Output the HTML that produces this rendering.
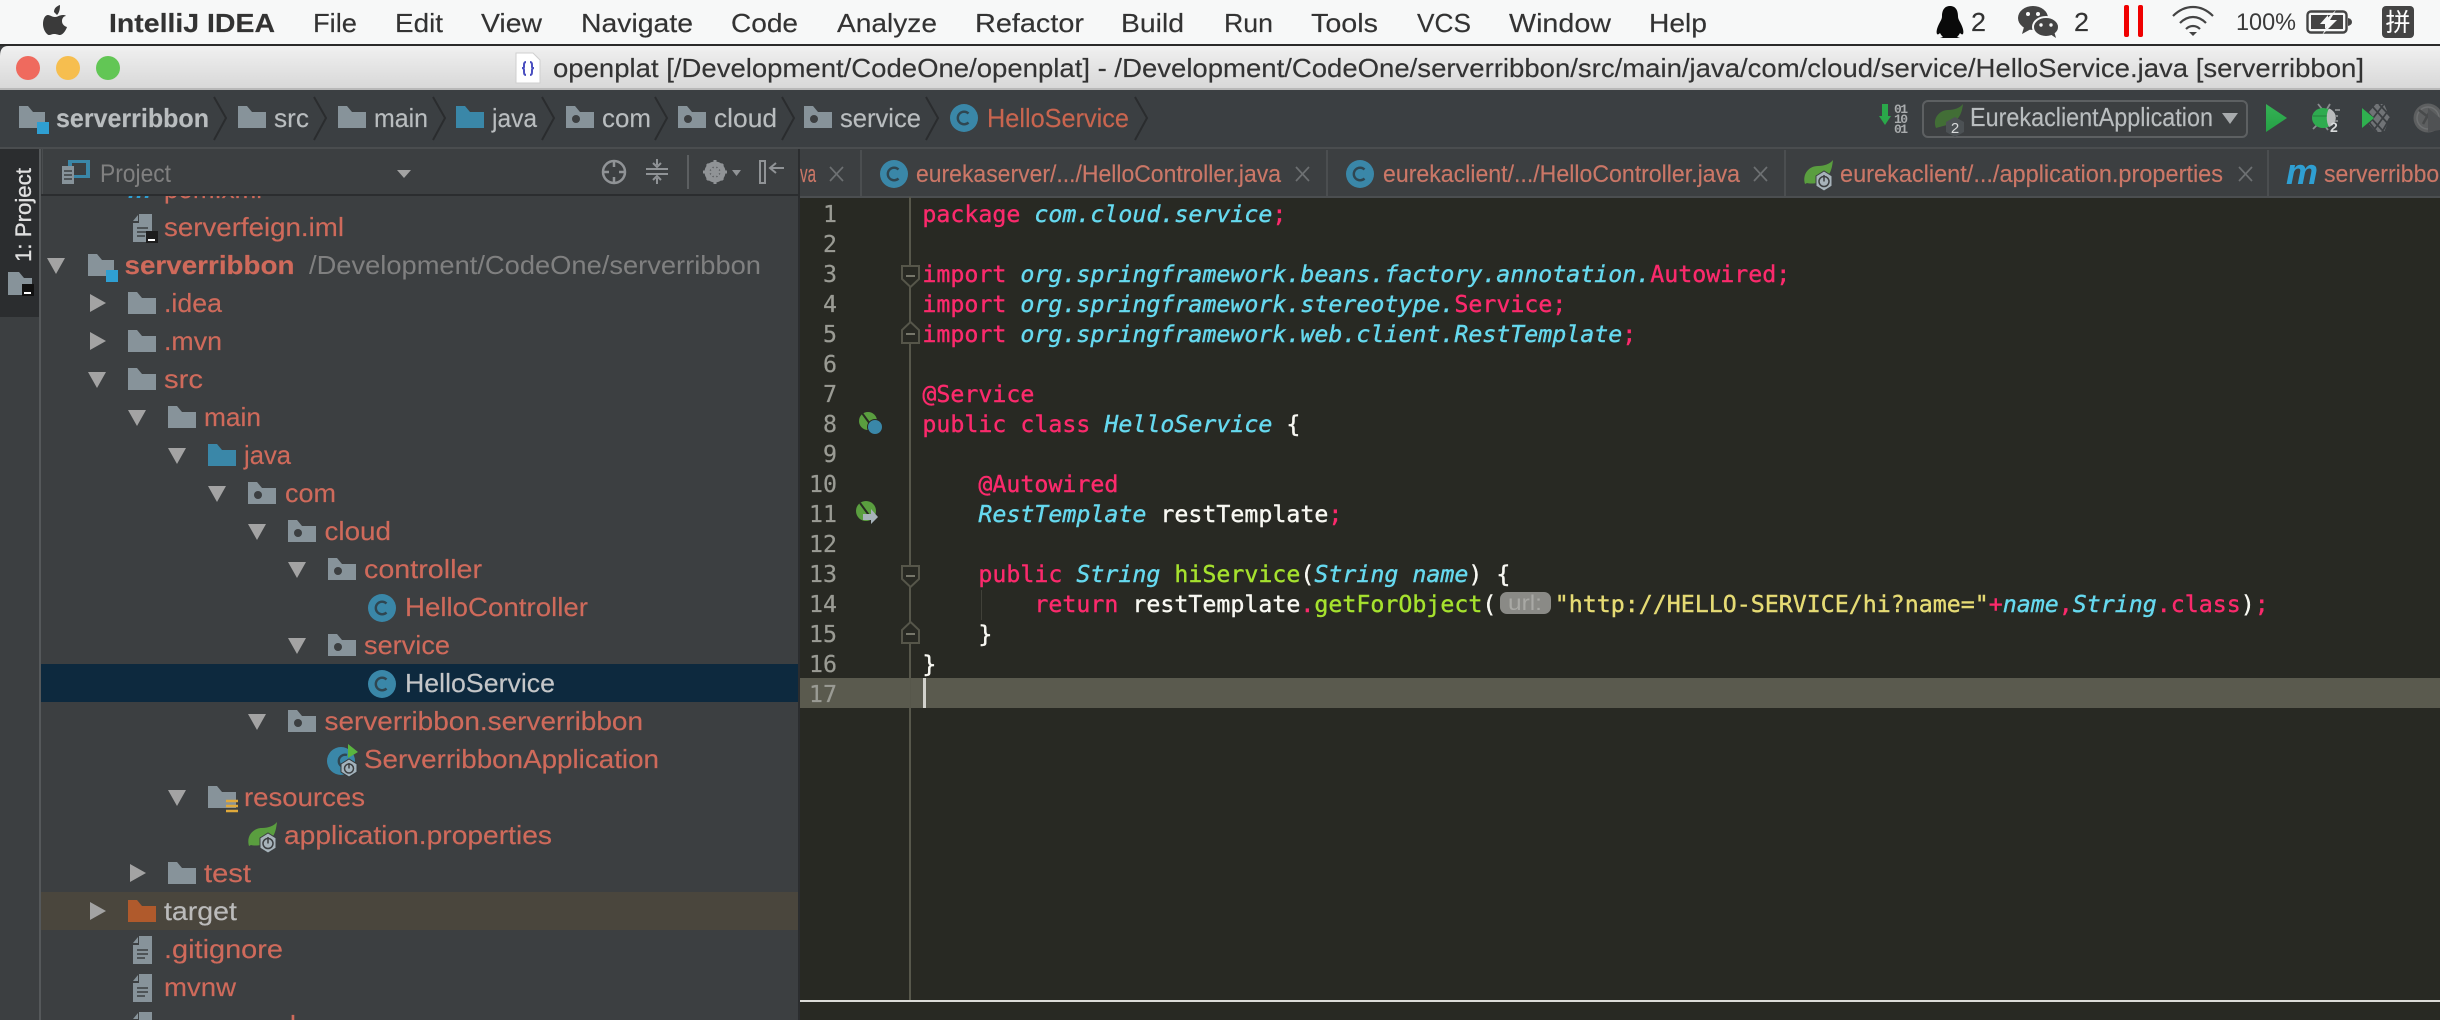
<!DOCTYPE html>
<html><head><meta charset="utf-8"><title>IntelliJ IDEA</title>
<style>
html,body{margin:0;padding:0;background:#282923;width:2440px;height:1020px;overflow:hidden}
svg{display:block;font-family:"Liberation Sans","Noto Sans CJK SC",sans-serif;filter:blur(.35px)}
.t{font-size:26px;fill:#cf6a5b;stroke:#cf6a5b;stroke-width:.15px}
.g{fill:#bbbbbb}
.menu{font-size:26px;fill:#333;stroke:#333;stroke-width:.15px}
.nav{font-size:26px;fill:#b9bdbf;stroke:#b9bdbf;stroke-width:.15px}
.tab{font-size:24px;fill:#cb7767;stroke:#cb7767;stroke-width:.15px}
.code{font-family:"DejaVu Sans Mono","Liberation Mono",monospace;font-size:23.25px;white-space:pre;stroke-width:.4px}
.k{fill:#fb2a6c;stroke:#fb2a6c}.c{fill:#66d9ef;stroke:#66d9ef;font-style:italic}.w{fill:#f8f8f2;stroke:#f8f8f2}.m{fill:#a6e22e;stroke:#a6e22e}.s{fill:#e6db74;stroke:#e6db74}
.ln{font-family:"DejaVu Sans Mono","Liberation Mono",monospace;font-size:23.25px;fill:#9a9b94;stroke:#9a9b94;stroke-width:.25px;text-anchor:end}
</style></head><body>
<svg width="2440" height="1020" viewBox="0 0 2440 1020" xmlns="http://www.w3.org/2000/svg">
<defs>
<g id="fo"><path d="M0 0H9L14 6H28V22H0Z" fill="#87939a"/></g>
<g id="fj"><path d="M0 0H9L14 6H28V22H0Z" fill="#3a87a8"/></g>
<g id="fp"><path d="M0 0H9L14 6H28V22H0Z" fill="#87939a"/><ellipse cx="10" cy="13" rx="4" ry="4" fill="#3c3f41"/></g>
<g id="fm"><path d="M0 0H9L14 6H26V22H0Z" fill="#87939a"/><rect x="18" y="16" width="12" height="12" fill="#2f9fd2"/></g>
<g id="dn"><path d="M0 0H18L9 16Z" fill="#a3a3a3"/></g>
<g id="rt"><path d="M0 0L16 9L0 18Z" fill="#a3a3a3"/></g>
<g id="cc"><circle cx="14" cy="14" r="14" fill="#3a87a8"/><path d="M18.500 9.500A6.300 6.300 0 1 0 18.500 18.500" fill="none" stroke="#2f4651" stroke-width="2.400"/></g>
<g id="file"><path d="M6 0H19V28H0V9H6Z" fill="#87939a"/><path d="M0 7L5 1V7Z" fill="#87939a"/><path d="M4 14H15M4 18H15M4 22H12" stroke="#3c3f41" stroke-width="1.600"/></g>
<g id="leaf"><path d="M29 0C28 8 27 14 20 20C14 24 6 24 3 23L1 24C-2 14 5 6 14 6C20 6 26 4 29 0Z" fill="#5a9e3f"/><path d="M12 16L20 11L28 16V26L20 31L12 26Z" fill="#a7b3ba" stroke="#3c3f41" stroke-width="1"/><circle cx="20" cy="21.500" r="5" fill="none" stroke="#3c3f41" stroke-width="1.500"/><path d="M20 15V21.500" stroke="#3c3f41" stroke-width="1.500"/></g>
<linearGradient id="tg" x1="0" y1="0" x2="0" y2="1"><stop offset="0" stop-color="#f0f0f0"/><stop offset="1" stop-color="#d8d8d8"/></linearGradient>
<linearGradient id="rg" x1="0" y1="0" x2="0" y2="1"><stop offset="0" stop-color="#35b255"/><stop offset="1" stop-color="#25a045"/></linearGradient>
</defs>

<rect width="2440" height="1020" fill="#3c3f41"/>
<!-- menu bar -->
<rect width="2440" height="44" fill="#f7f8f8"/>
<rect y="44" width="2440" height="2" fill="#2a2a2a"/>
<path d="M56 15C58 13 59 10 59 5C56 6 53 8 53 12ZM62 15C58 15 57 17 54 17C51 17 49 15 47 15C44 15 42 19 42 24C42 30 46 35 48 35C50 35 51 34 53 34C56 34 57 35 59 35C62 35 65 30 66 27C63 26 61 24 61 21C61 18 63 16 65 16C64 15 63 15 62 15Z" fill="#3a3a3a" transform="translate(1 0)"/>
<text x="109" y="32" class="menu" font-weight="bold" textLength="166" lengthAdjust="spacingAndGlyphs">IntelliJ IDEA</text>
<text x="313" y="32" class="menu" textLength="44" lengthAdjust="spacingAndGlyphs">File</text>
<text x="395" y="32" class="menu" textLength="48" lengthAdjust="spacingAndGlyphs">Edit</text>
<text x="481" y="32" class="menu" textLength="61" lengthAdjust="spacingAndGlyphs">View</text>
<text x="581" y="32" class="menu" textLength="112" lengthAdjust="spacingAndGlyphs">Navigate</text>
<text x="731" y="32" class="menu" textLength="67" lengthAdjust="spacingAndGlyphs">Code</text>
<text x="837" y="32" class="menu" textLength="100" lengthAdjust="spacingAndGlyphs">Analyze</text>
<text x="975" y="32" class="menu" textLength="109" lengthAdjust="spacingAndGlyphs">Refactor</text>
<text x="1121" y="32" class="menu" textLength="63" lengthAdjust="spacingAndGlyphs">Build</text>
<text x="1224" y="32" class="menu" textLength="49" lengthAdjust="spacingAndGlyphs">Run</text>
<text x="1311" y="32" class="menu" textLength="67" lengthAdjust="spacingAndGlyphs">Tools</text>
<text x="1417" y="32" class="menu" textLength="54" lengthAdjust="spacingAndGlyphs">VCS</text>
<text x="1509" y="32" class="menu" textLength="102" lengthAdjust="spacingAndGlyphs">Window</text>
<text x="1649" y="32" class="menu" textLength="58" lengthAdjust="spacingAndGlyphs">Help</text>
<!-- status icons -->
<path d="M1950 6C1944 6 1942 11 1942 16C1942 19 1941 20 1939 24C1937 28 1936 32 1937 34C1938 35 1939 34 1940 33C1941 35 1942 36 1943 37L1940 38H1960L1957 37C1958 36 1959 35 1960 33C1961 34 1962 35 1963 34C1964 32 1963 28 1961 24C1959 20 1958 19 1958 16C1958 11 1956 6 1950 6Z" fill="#0a0a0a"/>
<text x="1971" y="31" class="menu" textLength="15" lengthAdjust="spacingAndGlyphs">2</text>
<ellipse cx="2033" cy="18" rx="15" ry="12" fill="#444"/><path d="M2024 27L2022 34L2031 29Z" fill="#444"/>
<ellipse cx="2046" cy="27" rx="13" ry="10" fill="#444" stroke="#f7f8f8" stroke-width="2"/><path d="M2050 34L2056 38L2054 31Z" fill="#444"/>
<circle cx="2028" cy="14" r="2" fill="#f7f8f8"/><circle cx="2038" cy="14" r="2" fill="#f7f8f8"/><circle cx="2041" cy="25" r="1.700" fill="#f7f8f8"/><circle cx="2051" cy="25" r="1.700" fill="#f7f8f8"/>
<text x="2074" y="31" class="menu" textLength="15" lengthAdjust="spacingAndGlyphs">2</text>
<rect x="2124" y="5" width="5" height="32" rx="2" fill="#f00000"/><rect x="2138" y="5" width="5" height="32" rx="2" fill="#f00000"/>
<path d="M2173 16C2185 4 2201 4 2213 16M2180 23C2188 15 2198 15 2206 23M2186 29C2190 25 2196 25 2200 29" fill="none" stroke="#444" stroke-width="2.200"/><path d="M2189 32H2197L2193 36Z" fill="#444"/>
<text x="2236" y="30" font-size="24" fill="#3a3a3a" textLength="60" lengthAdjust="spacingAndGlyphs">100%</text>
<rect x="2307.500" y="11.500" width="39" height="21" rx="3.500" fill="none" stroke="#444" stroke-width="2.400"/><path d="M2348 18Q2352 19 2352 22Q2352 25 2348 26Z" fill="#444"/>
<path d="M2311 15H2328L2320 24H2325V29H2311Z" fill="#444"/><path d="M2343 15V29H2325L2333 20H2328V15Z" fill="#444"/>
<path d="M2336 10L2322 23H2329L2322 35L2337 20H2330Z" fill="#f7f8f8"/>
<rect x="2382" y="6" width="32" height="32" rx="4" fill="#444"/>
<text x="2398" y="31" font-size="25" fill="#fff" text-anchor="middle" style="font-family:'Noto Sans CJK SC',sans-serif">拼</text>
<!-- title bar -->
<path d="M0 56Q0 46 8 46H2440V88H0Z" fill="url(#tg)"/>
<rect y="88" width="2440" height="2" fill="#b8b8b8"/>
<circle cx="28" cy="68" r="12" fill="#ef6a5e"/><circle cx="68" cy="68" r="12" fill="#f6be4f"/><circle cx="108" cy="68" r="12" fill="#62c655"/>
<path d="M516 53H533L540 60V83H516Z" fill="#fff" stroke="#cfcfcf"/><path d="M526 62Q524 62 524 65V67Q524 68 522 68Q524 68 524 70V72Q524 75 526 75M530 62Q532 62 532 65V67Q532 68 534 68Q532 68 532 70V72Q532 75 530 75" fill="none" stroke="#4a4fc0" stroke-width="2"/>
<text x="553" y="77" font-size="26" fill="#333" stroke="#333" stroke-width=".15" textLength="1811" lengthAdjust="spacingAndGlyphs">openplat [/Development/CodeOne/openplat] - /Development/CodeOne/serverribbon/src/main/java/com/cloud/service/HelloService.java [serverribbon]</text>
<!-- nav bar -->
<rect y="90" width="2440" height="58" fill="#3b3f42"/>
<rect y="147" width="2440" height="2" fill="#4a4d4f"/>
<use href="#fm" x="19" y="106"/>
<text x="56" y="127" class="nav" font-weight="bold" textLength="153" lengthAdjust="spacingAndGlyphs">serverribbon</text>
<g fill="none" stroke="#2a2c2e" stroke-width="2">
<path d="M214 97L226 118L214 140"/><path d="M314 97L326 118L314 140"/><path d="M433 97L445 118L433 140"/><path d="M542 97L554 118L542 140"/><path d="M655 97L667 118L655 140"/><path d="M782 97L794 118L782 140"/><path d="M926 97L938 118L926 140"/><path d="M1135 97L1147 118L1135 140"/>
</g>
<use href="#fo" x="238" y="106"/><text x="274" y="127" class="nav" textLength="35" lengthAdjust="spacingAndGlyphs">src</text>
<use href="#fo" x="338" y="106"/><text x="374" y="127" class="nav" textLength="54" lengthAdjust="spacingAndGlyphs">main</text>
<use href="#fj" x="456" y="106"/><text x="492" y="127" class="nav" textLength="45" lengthAdjust="spacingAndGlyphs">java</text>
<use href="#fp" x="566" y="106"/><text x="602" y="127" class="nav" textLength="49" lengthAdjust="spacingAndGlyphs">com</text>
<use href="#fp" x="678" y="106"/><text x="714" y="127" class="nav" textLength="63" lengthAdjust="spacingAndGlyphs">cloud</text>
<use href="#fp" x="804" y="106"/><text x="840" y="127" class="nav" textLength="81" lengthAdjust="spacingAndGlyphs">service</text>
<use href="#cc" x="950" y="104"/><text x="987" y="127" font-size="26" fill="#c9654f" stroke="#c9654f" stroke-width=".15" textLength="142" lengthAdjust="spacingAndGlyphs">HelloService</text>
<!-- run toolbar -->
<path d="M1882 104H1888V116H1891L1885 125L1879 116H1882Z" fill="#2aa84a"/>
<g font-size="13" font-weight="bold" fill="#a8abad" style="font-family:'Liberation Mono',monospace"><text x="1894" y="113" textLength="14">01</text><text x="1894" y="123" textLength="14">10</text><text x="1894" y="133" textLength="14">01</text></g>
<rect x="1923" y="101" width="324" height="36" rx="5" fill="#3c3f41" stroke="#5d6062" stroke-width="2"/>
<path d="M1963 104C1962 112 1960 120 1950 124C1944 126 1939 127 1936 128C1932 118 1940 110 1948 110C1954 110 1960 108 1963 104Z" fill="#426e36"/>
<path d="M1946 122L1955 117L1964 122V132L1955 137L1946 132Z" fill="#4c5154"/><text x="1955" y="133" font-size="15" fill="#d8dadb" text-anchor="middle">2</text>
<text x="1970" y="126" class="nav" textLength="243" lengthAdjust="spacingAndGlyphs">EurekaclientApplication</text>
<path d="M2222 113H2238L2230 124Z" fill="#a8abad"/>
<path d="M2266 104L2287 118L2266 132Z" fill="url(#rg)"/>
<path d="M2318 104L2322 109M2330 104L2327 109M2313 129L2317 125M2328 130L2325 126" stroke="#8a8d8f" stroke-width="1.800" fill="none"/>
<ellipse cx="2323" cy="118" rx="11" ry="10" fill="#2fab50"/><path d="M2313 116H2332" stroke="#257f3e" stroke-width="1"/>
<path d="M2329 108.500A11 10 0 0 1 2329 127C2326 122 2326 113 2329 108.500Z" fill="#b9bbbc"/>
<path d="M2335 110H2340M2335 116H2338M2335 121H2338" stroke="#8a8d8f" stroke-width="1.800"/>
<text x="2330" y="132" font-size="14" font-weight="bold" fill="#d8dadb">2</text>
<path d="M2376 104H2384L2390 118L2384 132H2376L2369 124L2374 118L2369 112Z" fill="#707376"/>
<path d="M2372 106L2390 126M2379 104L2390 116M2369 116L2384 132M2369 122L2377 132M2384 104L2370 122M2390 108L2374 130M2390 118L2382 132" stroke="#3b3f42" stroke-width="1.800"/>
<path d="M2362 108L2374 118L2362 128Z" fill="#2fb04f"/>
<circle cx="2428" cy="118" r="14.500" fill="#5d5f60"/><circle cx="2428" cy="118" r="11" fill="none" stroke="#6e7071" stroke-width="1.500"/><path d="M2419 110L2432 120M2423 124L2429 113" stroke="#484a4b" stroke-width="2.500"/><path d="M2428 108L2440 118V130L2428 132Z" fill="#505254"/>
<!-- side strip -->
<rect y="149" width="39" height="871" fill="#3c3f41"/>
<rect x="39" y="149" width="2" height="871" fill="#55585a"/>
<rect y="149" width="39" height="168" fill="#2b2d2f"/>
<text x="31" y="262" font-size="22" fill="#e0e0e0" stroke="#e0e0e0" stroke-width=".3" transform="rotate(-90 31 262)" textLength="94" lengthAdjust="spacingAndGlyphs">1: Project</text>
<path d="M8 272H19L24 278H32V295H8Z" fill="#87939a"/><rect x="22" y="284" width="12" height="12" fill="#111"/><rect x="24" y="292" width="7" height="2" fill="#fff"/>
<!-- project tree: clipped row first -->
<text x="128" y="198" font-size="26" font-style="italic" font-weight="bold" fill="#2f9fd2">m</text>
<text x="164" y="198" class="t" textLength="98" lengthAdjust="spacingAndGlyphs">pom.xml</text>
<!-- project header -->
<rect x="41" y="149" width="757" height="45" fill="#3c3f41"/>
<rect x="41" y="194" width="757" height="2" fill="#2b2d2f"/>
<rect x="42" y="149" width="1" height="45" fill="#4a4d4f"/>
<rect x="68" y="160" width="22" height="18" fill="#3a87a8"/><rect x="72" y="163" width="14" height="12" fill="#3c3f41"/>
<path d="M62 166H74V184H62Z" fill="#87939a"/><path d="M64 171H72M64 175H72M64 179H72" stroke="#3c3f41" stroke-width="1.500"/>
<text x="100" y="182" font-size="25" fill="#808080" textLength="71" lengthAdjust="spacingAndGlyphs">Project</text>
<path d="M397 170H411L404 178Z" fill="#a3a3a3"/>
<circle cx="614" cy="172" r="11" fill="none" stroke="#909396" stroke-width="2.500"/><path d="M614 160V167M614 177V184M602 172H609M619 172H626" stroke="#909396" stroke-width="2.500"/>
<path d="M646 169H668M646 174H668" stroke="#909396" stroke-width="2"/><path d="M657 159V165M653 163L657 167L661 163M657 184V178M653 180L657 176L661 180" fill="none" stroke="#909396" stroke-width="2"/>
<rect x="687" y="155" width="2" height="34" fill="#5c5f61"/>
<circle cx="715" cy="172" r="8" fill="none" stroke="#909396" stroke-width="5"/><path d="M715 160V184M703 172H727M707 164L723 180M723 164L707 180" stroke="#909396" stroke-width="3"/>
<path d="M732 170H741L736.500 176Z" fill="#909396"/>
<rect x="760" y="161" width="5" height="22" fill="none" stroke="#909396" stroke-width="2"/><path d="M784 168H771M776 163L770 168L776 173" fill="none" stroke="#909396" stroke-width="2"/>
<!-- rows -->
<rect x="41" y="664" width="757" height="38" fill="#0d293e"/>
<rect x="41" y="892" width="757" height="38" fill="#4a463d"/>
<use href="#file" x="133" y="214"/><rect x="146" y="231" width="12" height="12" fill="#1d1d1d"/><rect x="148" y="239" width="7" height="2" fill="#fff"/>
<text x="164" y="236" class="t" textLength="180" lengthAdjust="spacingAndGlyphs">serverfeign.iml</text>
<use href="#dn" x="47" y="258"/><use href="#fm" x="88" y="254"/>
<text x="124.500" y="274" class="t" font-weight="bold" textLength="170" lengthAdjust="spacingAndGlyphs">serverribbon</text>
<text x="309" y="274" font-size="26" fill="#808080" textLength="452" lengthAdjust="spacingAndGlyphs">/Development/CodeOne/serverribbon</text>
<use href="#rt" x="90" y="294"/><use href="#fo" x="128" y="292"/><text x="164" y="312" class="t" textLength="58" lengthAdjust="spacingAndGlyphs">.idea</text>
<use href="#rt" x="90" y="332"/><use href="#fo" x="128" y="330"/><text x="164" y="350" class="t" textLength="58" lengthAdjust="spacingAndGlyphs">.mvn</text>
<use href="#dn" x="88" y="372"/><use href="#fo" x="128" y="368"/><text x="164" y="388" class="t" textLength="39" lengthAdjust="spacingAndGlyphs">src</text>
<use href="#dn" x="128" y="410"/><use href="#fo" x="168" y="406"/><text x="204" y="426" class="t" textLength="57" lengthAdjust="spacingAndGlyphs">main</text>
<use href="#dn" x="168" y="448"/><use href="#fj" x="208" y="444"/><text x="244" y="464" class="t" textLength="47" lengthAdjust="spacingAndGlyphs">java</text>
<use href="#dn" x="208" y="486"/><use href="#fp" x="248" y="482"/><text x="285" y="502" class="t" textLength="51" lengthAdjust="spacingAndGlyphs">com</text>
<use href="#dn" x="248" y="524"/><use href="#fp" x="288" y="520"/><text x="324.500" y="540" class="t" textLength="66.500" lengthAdjust="spacingAndGlyphs">cloud</text>
<use href="#dn" x="288" y="562"/><use href="#fp" x="328" y="558"/><text x="364" y="578" class="t" textLength="118" lengthAdjust="spacingAndGlyphs">controller</text>
<use href="#cc" x="368" y="594"/><text x="405" y="616" class="t" textLength="183" lengthAdjust="spacingAndGlyphs">HelloController</text>
<use href="#dn" x="288" y="638"/><use href="#fp" x="328" y="634"/><text x="364" y="654" class="t" textLength="86" lengthAdjust="spacingAndGlyphs">service</text>
<use href="#cc" x="368" y="670"/><text x="405" y="692" font-size="26" fill="#c4c6c8" stroke="#c4c6c8" stroke-width=".15" textLength="150" lengthAdjust="spacingAndGlyphs">HelloService</text>
<use href="#dn" x="248" y="714"/><use href="#fp" x="288" y="710"/><text x="324.500" y="730" class="t" textLength="318.500" lengthAdjust="spacingAndGlyphs">serverribbon.serverribbon</text>
<circle cx="341" cy="761" r="14" fill="#3a87a8"/><path d="M347 755A6.300 6.300 0 1 0 347 767" fill="none" stroke="#2f4651" stroke-width="2.400"/>
<path d="M348 744L358 752L348 758Z" fill="#5ab53f"/><path d="M341 764L349 759L357 764V772L349 777L341 772Z" fill="#a3b3bc" stroke="#34383a" stroke-width="1"/><circle cx="349" cy="768.500" r="4.500" fill="none" stroke="#3c3f41" stroke-width="1.500"/><path d="M349 763V768.500" stroke="#3c3f41" stroke-width="1.500"/>
<text x="364" y="768" class="t" textLength="295" lengthAdjust="spacingAndGlyphs">ServerribbonApplication</text>
<use href="#dn" x="168" y="790"/><path d="M208 786H217L222 792H236V808H208Z" fill="#87939a"/><path d="M226 801H238M226 806H238M226 811H238" stroke="#e0a93b" stroke-width="2.600"/>
<text x="244" y="806" class="t" textLength="121" lengthAdjust="spacingAndGlyphs">resources</text>
<use href="#leaf" x="248" y="822"/><text x="284" y="844" class="t" textLength="268" lengthAdjust="spacingAndGlyphs">application.properties</text>
<use href="#rt" x="130" y="864"/><use href="#fo" x="168" y="862"/><text x="204" y="882" class="t" textLength="47" lengthAdjust="spacingAndGlyphs">test</text>
<use href="#rt" x="90" y="902"/><path d="M128 900H137L142 906H156V922H128Z" fill="#b05a2c"/><text x="164" y="920" font-size="26" fill="#bbbbbb" stroke="#bbbbbb" stroke-width=".15" textLength="73" lengthAdjust="spacingAndGlyphs">target</text>
<use href="#file" x="133" y="936"/><text x="164" y="958" class="t" textLength="119" lengthAdjust="spacingAndGlyphs">.gitignore</text>
<use href="#file" x="133" y="974"/><text x="164" y="996" class="t" textLength="72" lengthAdjust="spacingAndGlyphs">mvnw</text>
<use href="#file" x="133" y="1012"/><text x="164" y="1034" class="t" textLength="132" lengthAdjust="spacingAndGlyphs">mvnw.cmd</text>
<!-- editor -->
<rect x="798" y="149" width="2" height="871" fill="#2b2d2f"/>
<rect x="800" y="197" width="1640" height="823" fill="#282923"/>
<rect x="800" y="149" width="1640" height="48" fill="#3c3f41"/>
<rect x="800" y="196" width="1640" height="2" fill="#4b4e50"/>
<g fill="#4b4e50"><rect x="860" y="150" width="2" height="46"/><rect x="1326" y="150" width="2" height="46"/><rect x="1784" y="150" width="2" height="46"/><rect x="2267" y="150" width="2" height="46"/></g>
<text x="800" y="182" class="tab" textLength="16" lengthAdjust="spacingAndGlyphs">va</text>
<g stroke="#6d7072" stroke-width="1.700">
<path d="M830 167L843 181M843 167L830 181"/>
<path d="M1296 167L1309 181M1309 167L1296 181"/>
<path d="M1754 167L1767 181M1767 167L1754 181"/>
<path d="M2239 167L2252 181M2252 167L2239 181"/>
</g>
<use href="#cc" x="880" y="160"/><text x="916" y="182" class="tab" textLength="365" lengthAdjust="spacingAndGlyphs">eurekaserver/.../HelloController.java</text>
<use href="#cc" x="1346" y="160"/><text x="1383" y="182" class="tab" textLength="357" lengthAdjust="spacingAndGlyphs">eurekaclient/.../HelloController.java</text>
<use href="#leaf" x="1804" y="160"/><text x="1840" y="182" class="tab" textLength="383" lengthAdjust="spacingAndGlyphs">eurekaclient/.../application.properties</text>
<text x="2286" y="184" font-size="36" font-style="italic" font-weight="bold" fill="#2f9fd2" textLength="32" lengthAdjust="spacingAndGlyphs">m</text>
<text x="2324" y="182" class="tab" textLength="128" lengthAdjust="spacingAndGlyphs">serverribbon</text>
<!-- highlight, gutter line -->
<rect x="800" y="678" width="1640" height="30" fill="#5a5a4e"/>
<rect x="909" y="197" width="2" height="803" fill="#57574b"/>
<rect x="800" y="678" width="110" height="30" fill="#5a5a4e"/>
<rect x="923" y="678" width="3" height="30" fill="#d2d2cc"/>
<rect x="981" y="590" width="1" height="30" fill="#414139"/>
<rect x="800" y="1000" width="1640" height="2" fill="#dcdcd8"/>
<!-- fold markers -->
<g fill="#282923" stroke="#56564a" stroke-width="2">
<path d="M902 266H919V279L910.500 287L902 279Z"/><path d="M910.500 322L919 330V343H902V330Z"/>
<path d="M902 566H919V579L910.500 587L902 579Z"/><path d="M910.500 622L919 630V643H902V630Z"/>
</g>
<path d="M906 276H915M906 334H915M906 576H915M906 634H915" stroke="#76766a" stroke-width="2"/>
<!-- line numbers -->
<text x="837" y="222" class="ln">1</text><text x="837" y="252" class="ln">2</text><text x="837" y="282" class="ln">3</text><text x="837" y="312" class="ln">4</text><text x="837" y="342" class="ln">5</text><text x="837" y="372" class="ln">6</text><text x="837" y="402" class="ln">7</text><text x="837" y="432" class="ln">8</text><text x="837" y="462" class="ln">9</text><text x="837" y="492" class="ln">10</text><text x="837" y="522" class="ln">11</text><text x="837" y="552" class="ln">12</text><text x="837" y="582" class="ln">13</text><text x="837" y="612" class="ln">14</text><text x="837" y="642" class="ln">15</text><text x="837" y="672" class="ln">16</text><text x="837" y="702" class="ln">17</text>
<!-- gutter icons -->
<circle cx="868" cy="421" r="9" fill="#5a9e3f"/><path d="M862 413L873 428" stroke="#282923" stroke-width="2"/><circle cx="875" cy="427" r="7.500" fill="#3a87a8" stroke="#282923" stroke-width="1"/>
<circle cx="866" cy="511" r="10" fill="#5a9e3f"/><path d="M860 503L871 518" stroke="#282923" stroke-width="2"/><path d="M863 514H871V509L878 517L871 524V520H863Z" fill="#a7b3ba"/>
<!-- code -->
<text class="code" y="222" x="922.400"><tspan class="k">package</tspan> <tspan class="c">com.cloud.service</tspan><tspan class="k">;</tspan></text>
<text class="code" y="282" x="922.400"><tspan class="k">import</tspan> <tspan class="c">org.springframework.beans.factory.annotation.</tspan><tspan class="k">Autowired;</tspan></text>
<text class="code" y="312" x="922.400"><tspan class="k">import</tspan> <tspan class="c">org.springframework.stereotype.</tspan><tspan class="k">Service;</tspan></text>
<text class="code" y="342" x="922.400"><tspan class="k">import</tspan> <tspan class="c">org.springframework.web.client.RestTemplate</tspan><tspan class="k">;</tspan></text>
<text class="code" y="402" x="922.400"><tspan class="k">@Service</tspan></text>
<text class="code" y="432" x="922.400"><tspan class="k">public class</tspan> <tspan class="c">HelloService</tspan> <tspan class="w">{</tspan></text>
<text class="code" y="492" x="978.400"><tspan class="k">@Autowired</tspan></text>
<text class="code" y="522" x="978.400"><tspan class="c">RestTemplate</tspan> <tspan class="w">restTemplate</tspan><tspan class="k">;</tspan></text>
<text class="code" y="582" x="978.400"><tspan class="k">public</tspan> <tspan class="c">String</tspan> <tspan class="m">hiService</tspan><tspan class="w">(</tspan><tspan class="c">String name</tspan><tspan class="w">) {</tspan></text>
<text class="code" y="612" x="1034.400"><tspan class="k">return</tspan> <tspan class="w">restTemplate</tspan><tspan class="k">.</tspan><tspan class="m">getForObject</tspan><tspan class="w">(</tspan></text>
<rect x="1500" y="592" width="51" height="22" rx="7" fill="#8a8a86"/>
<text x="1508" y="610" font-size="21" fill="#a9a9a5" textLength="34" lengthAdjust="spacingAndGlyphs">url:</text>
<text class="code" y="612" x="1554.800"><tspan class="s">"http://HELLO-SERVICE/hi?name="</tspan><tspan class="k">+</tspan><tspan class="c">name</tspan><tspan class="k">,</tspan><tspan class="c">String</tspan><tspan class="k">.class</tspan><tspan class="w">)</tspan><tspan class="k">;</tspan></text>
<text class="code" y="642" x="978.400"><tspan class="w">}</tspan></text>
<text class="code" y="672" x="922.400"><tspan class="w">}</tspan></text>
</svg>
</body></html>
